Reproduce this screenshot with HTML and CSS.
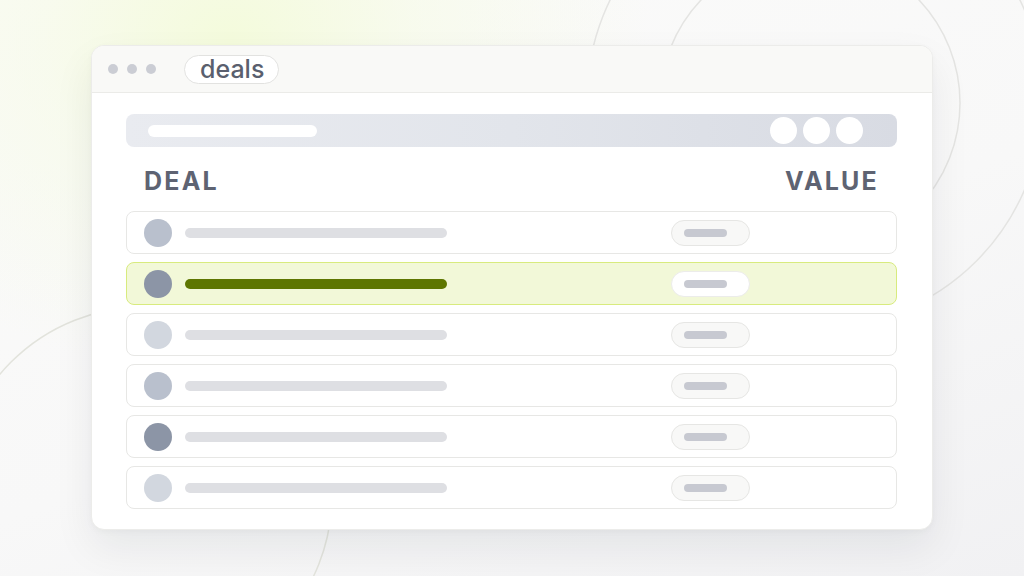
FILE: index.html
```html
<!DOCTYPE html>
<html>
<head>
<meta charset="utf-8">
<link rel="stylesheet" href="styles.css">
</head>
<body>
<div class="stage">
  <svg class="deco" width="1024" height="576" viewBox="0 0 1024 576">
    <circle cx="815" cy="100" r="228" fill="none" stroke="#e4e4e2" stroke-width="1.5"/>
    <circle cx="810" cy="103" r="150" fill="none" stroke="#e4e4e2" stroke-width="1.5"/>
    <circle cx="144" cy="495" r="188" fill="none" stroke="#e2e3dc" stroke-width="1.5"/>
  </svg>
  <div class="window">
    <div class="titlebar">
      <div class="dots"><span class="dot"></span><span class="dot"></span><span class="dot"></span></div>
      <div class="tab">deals</div>
    </div>
    <div class="content">
      <div class="toolbar">
        <span class="search"></span>
        <div class="tools"><span class="tool"></span><span class="tool"></span><span class="tool"></span></div>
      </div>
      <div class="heads"><span>DEAL</span><span>VALUE</span></div>
      <div class="rows">
        <div class="row"><span class="avatar a1"></span><span class="bar"></span><span class="pill"><span class="pbar"></span></span></div>
        <div class="row active"><span class="avatar a2"></span><span class="bar"></span><span class="pill"><span class="pbar"></span></span></div>
        <div class="row"><span class="avatar a3"></span><span class="bar"></span><span class="pill"><span class="pbar"></span></span></div>
        <div class="row"><span class="avatar a1"></span><span class="bar"></span><span class="pill"><span class="pbar"></span></span></div>
        <div class="row"><span class="avatar a2"></span><span class="bar"></span><span class="pill"><span class="pbar"></span></span></div>
        <div class="row"><span class="avatar a3"></span><span class="bar"></span><span class="pill"><span class="pbar"></span></span></div>
      </div>
    </div>
  </div>
</div>
</body>
</html>
```
FILE: styles.css
```css
html, body {
  margin: 0;
  padding: 0;
}
body {
  width: 1024px;
  height: 576px;
  overflow: hidden;
  font-family: Inter, "Liberation Sans", sans-serif;
}
.stage {
  position: relative;
  width: 1024px;
  height: 576px;
  box-sizing: border-box;
  padding: 45px 0 0 91px;
  background:
    radial-gradient(ellipse 420px 340px at 230px 40px, rgba(244, 251, 220, 1) 0%, rgba(246, 251, 230, 0.6) 45%, rgba(248, 249, 245, 0) 100%),
    linear-gradient(160deg, #fbfbfa 0%, #f8f8f8 55%, #f1f1f3 100%);
}
.deco {
  position: absolute;
  left: 0;
  top: 0;
}
.window {
  position: relative;
  width: 842px;
  height: 485px;
  box-sizing: border-box;
  background: #ffffff;
  border: 1px solid #ececea;
  border-radius: 13px;
  overflow: hidden;
  box-shadow: 0 18px 40px rgba(20, 24, 40, 0.07), 0 2px 6px rgba(20, 24, 40, 0.03);
  display: flex;
  flex-direction: column;
}
.titlebar {
  height: 47px;
  box-sizing: border-box;
  background: #f9f9f7;
  border-bottom: 1px solid #ebebe8;
  display: flex;
  align-items: center;
  padding-left: 16px;
}
.dots {
  display: flex;
  gap: 9px;
}
.dot {
  width: 10px;
  height: 10px;
  border-radius: 50%;
  background: #cbcdd4;
}
.tab {
  margin-left: 28px;
  height: 29px;
  box-sizing: border-box;
  padding: 0 14px 0 15px;
  border: 1px solid #e2e2e0;
  border-radius: 15px;
  background: #ffffff;
  font-size: 25px;
  font-weight: 500;
  line-height: 26px;
  color: #5a5f6e;
  display: flex;
  align-items: center;
}
.content {
  padding: 21px 35px 0 34px;
}
.toolbar {
  height: 33px;
  border-radius: 8px;
  background: linear-gradient(90deg, #e9ebf0 0%, #e2e5eb 50%, #d8dbe3 100%);
  display: flex;
  align-items: center;
  justify-content: space-between;
  padding: 0 34px 0 22px;
}
.search {
  width: 169px;
  height: 12px;
  border-radius: 6px;
  background: #ffffff;
}
.tools {
  display: flex;
  gap: 6px;
}
.tool {
  width: 27px;
  height: 27px;
  border-radius: 50%;
  background: #ffffff;
}
.heads {
  display: flex;
  justify-content: space-between;
  padding: 20px 18px 0 18px;
  height: 44px;
  font-size: 25px;
  font-weight: 700;
  letter-spacing: 2.2px;
  color: #5e6372;
  line-height: 28px;
}
.rows {
  display: flex;
  flex-direction: column;
  gap: 8px;
}
.row {
  height: 43px;
  box-sizing: border-box;
  border: 1px solid #e7e7e5;
  border-radius: 8px;
  background: #ffffff;
  display: flex;
  align-items: center;
  padding-left: 17px;
}
.row.active {
  background: #f2f8d8;
  border-color: #d8eb7e;
}
.avatar {
  width: 28px;
  height: 28px;
  border-radius: 50%;
}
.a1 { background: #b9c0cd; }
.a2 { background: #8c95a6; }
.a3 { background: #d2d7df; }
.bar {
  margin-left: 13px;
  width: 262px;
  height: 10px;
  border-radius: 5px;
  background: #dedfe3;
}
.active .bar {
  background: #5e7600;
}
.pill {
  margin-left: 224px;
  width: 79px;
  height: 26px;
  box-sizing: border-box;
  border: 1px solid #e6e6e4;
  border-radius: 13px;
  background: #f8f8f7;
  display: flex;
  align-items: center;
  padding-left: 12px;
}
.active .pill {
  background: #ffffff;
  border-color: #ececea;
}
.pbar {
  width: 43px;
  height: 8px;
  border-radius: 4px;
  background: #c7c9d1;
}
```
